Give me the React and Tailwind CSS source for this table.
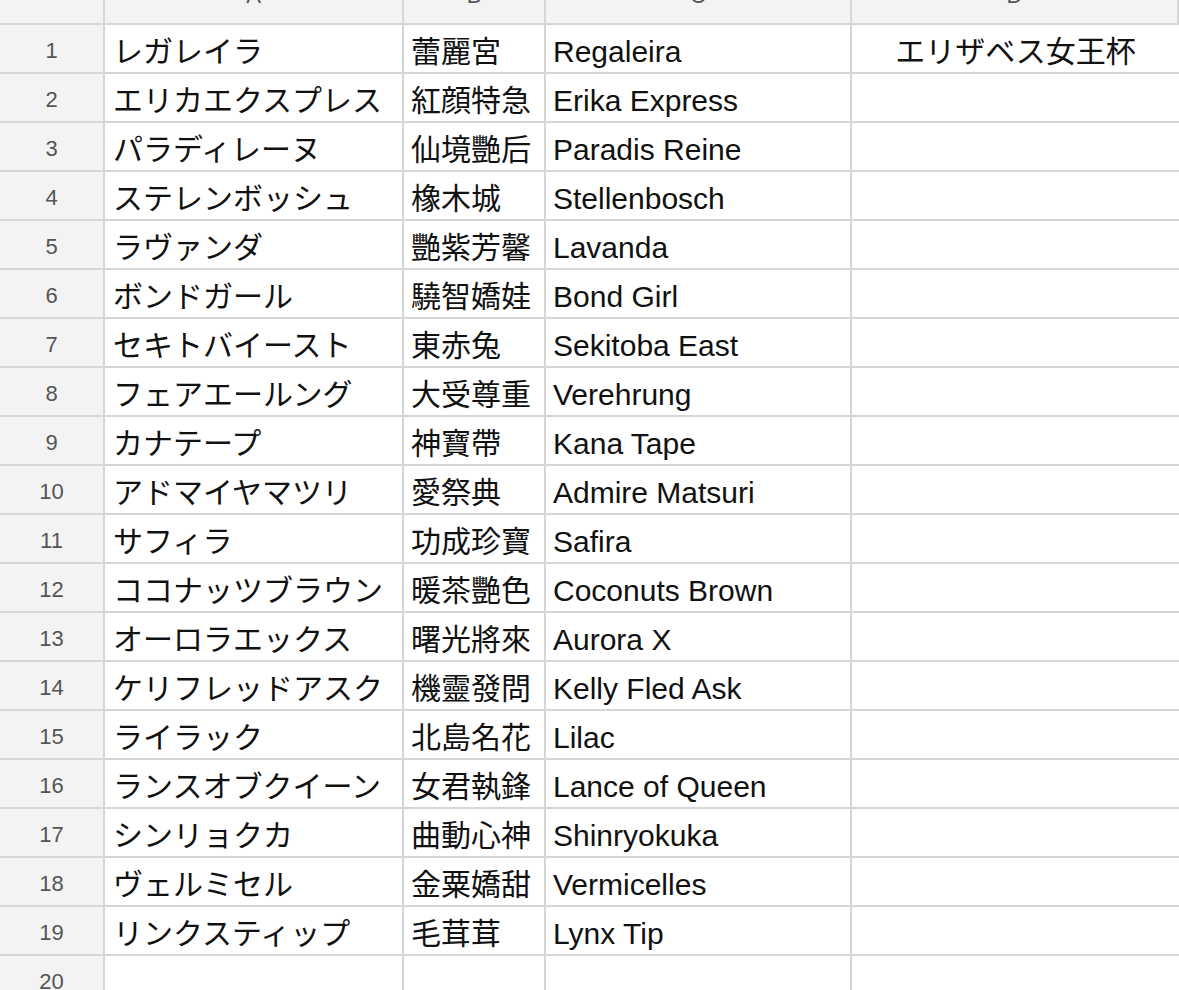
import React from 'react';

// rows copied from the sheet: katakana name, kanji name, romanised name
const rows = [
  ['レガレイラ', '蕾麗宮', 'Regaleira', 'エリザベス女王杯'],
  ['エリカエクスプレス', '紅顔特急', 'Erika Express'],
  ['パラディレーヌ', '仙境艷后', 'Paradis Reine'],
  ['ステレンボッシュ', '橡木城', 'Stellenbosch'],
  ['ラヴァンダ', '艷紫芳馨', 'Lavanda'],
  ['ボンドガール', '驍智嬌娃', 'Bond Girl'],
  ['セキトバイースト', '東赤兔', 'Sekitoba East'],
  ['フェアエールング', '大受尊重', 'Verehrung'],
  ['カナテープ', '神寶帶', 'Kana Tape'],
  ['アドマイヤマツリ', '愛祭典', 'Admire Matsuri'],
  ['サフィラ', '功成珍寶', 'Safira'],
  ['ココナッツブラウン', '暖茶艷色', 'Coconuts Brown'],
  ['オーロラエックス', '曙光將來', 'Aurora X'],
  ['ケリフレッドアスク', '機靈發問', 'Kelly Fled Ask'],
  ['ライラック', '北島名花', 'Lilac'],
  ['ランスオブクイーン', '女君執鋒', 'Lance of Queen'],
  ['シンリョクカ', '曲動心神', 'Shinryokuka'],
  ['ヴェルミセル', '金粟嬌甜', 'Vermicelles'],
  ['リンクスティップ', '毛茸茸', 'Lynx Tip'],
  ['', '', ''],
];

const cols = ['A', 'B', 'C', 'D'];

const App = () => {
  return (
    <div className="h-screen w-full overflow-hidden bg-white font-['Liberation_Sans','Noto_Sans_CJK_JP',sans-serif]">
      <div className="grid grid-cols-[105px_299px_142px_306px_1fr]">
        {/* column header strip, its top is cut off in the screenshot */}
        <div className="h-[25px] bg-[#f3f3f3] border-r-2 border-b-2 border-[#d6d6d6]" />
        {cols.map(c => (
          <div key={c} className="h-[25px] overflow-hidden bg-[#f3f3f3] border-r-2 border-b-2 border-[#d6d6d6] flex items-end justify-center pb-[16px]">
            <span className="text-[22px] leading-none text-[#555]">{c}</span>
          </div>
        ))}

        {rows.map((r, i) => (
          <React.Fragment key={i}>
            <div className="h-[49px] bg-[#f3f3f3] border-r-2 border-b-2 border-[#d6d6d6] flex items-center justify-center pt-[3px] text-[22px] text-[#555]">
              {i + 1}
            </div>
            <div className="h-[49px] border-r-2 border-b-2 border-[#d6d6d6] flex items-center pl-[8px] pt-[5px] text-[30px] text-[#111] whitespace-nowrap overflow-hidden">
              {r[0]}
            </div>
            <div className="h-[49px] border-r-2 border-b-2 border-[#d6d6d6] flex items-center pl-[7px] pt-[5px] text-[30px] text-[#111] whitespace-nowrap overflow-hidden">
              {r[1]}
            </div>
            <div className="h-[49px] border-r-2 border-b-2 border-[#d6d6d6] flex items-center pl-[7px] pt-[5px] text-[30px] text-[#111] whitespace-nowrap overflow-hidden">
              {r[2]}
            </div>
            <div className="h-[49px] border-b-2 border-[#d6d6d6] flex items-center justify-center pt-[5px] text-[30px] text-[#111] whitespace-nowrap overflow-hidden">
              {r[3] || ''}
            </div>
          </React.Fragment>
        ))}
      </div>
    </div>
  );
};

export default App;
